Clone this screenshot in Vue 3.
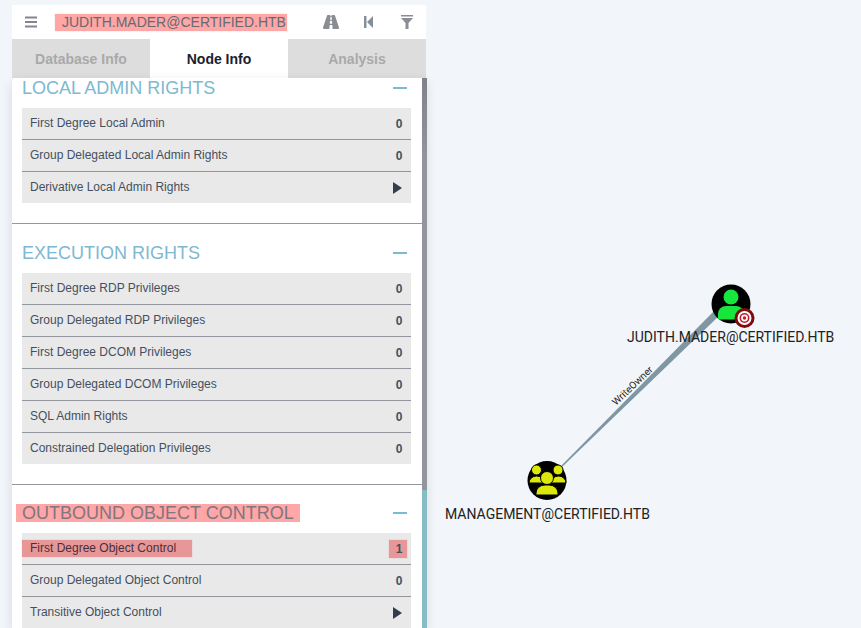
<template>
  <div class="page">
    <svg class="graph" viewBox="0 0 861 628" width="861" height="628">
      <polygon points="560,467 561,468 721,314 716,309" fill="#7f96a3" />
      <text class="edge-label" transform="translate(616,406) rotate(-43.5)">WriteOwner</text>

      <circle cx="731" cy="304" r="19.5" fill="#000" />
      <circle cx="731" cy="297" r="7.5" fill="#17e63c" />
      <path d="M718 318 v-4 a8 8 0 0 1 8-8 h10 a8 8 0 0 1 8 8 v4 a1.500 1.500 0 0 1-1.500 1.500 h-23 a1.500 1.500 0 0 1-1.500-1.500z" fill="#17e63c" />
      <circle cx="744.500" cy="318" r="10" fill="#7f0c0c" />
      <circle cx="744.500" cy="318" r="7" fill="#fff" />
      <circle cx="744.500" cy="318" r="5" fill="#c01c28" />
      <circle cx="744.500" cy="318" r="3.400" fill="#fff" />
      <circle cx="744.500" cy="318" r="1.700" fill="#c01c28" />
      <text class="node-label" x="627" y="342">JUDITH.MADER@CERTIFIED.HTB</text>

      <circle cx="547" cy="480.500" r="19.500" fill="#000" />
      <g fill="#dce80a" stroke="#000" stroke-width="1">
        <circle cx="536.500" cy="470" r="5" />
        <circle cx="558" cy="470" r="5" />
        <path d="M529 483 a7.500 7 0 0 1 15 0 z" />
        <path d="M551 483 a7.500 7 0 0 1 15 0 z" />
        <circle cx="547" cy="478" r="6.500" />
        <path d="M536 495 v-2 a9 8 0 0 1 9-8 h4 a9 8 0 0 1 9 8 v2 z" />
      </g>
      <text class="node-label" x="445" y="519">MANAGEMENT@CERTIFIED.HTB</text>
    </svg>

    <div class="panel">
      <div class="search-bar">
        <svg class="menu-icon" viewBox="0 0 12 12" width="12" height="12">
          <path d="M0 0.500h12v2H0zM0 5h12v2H0zM0 9.500h12v2H0z" fill="#83868c" />
        </svg>
        <div class="search-text"><span class="hl">JUDITH.MADER@CERTIFIED.HTB</span></div>
        <div class="bar-icons">
          <svg viewBox="0 64 576 384" width="16" height="14" preserveAspectRatio="none">
            <path d="M573.19 402.67l-139.79-320C428.43 71.29 417.6 64 405.68 64h-97.59l2.45 23.16c.5 4.72-3.21 8.84-7.96 8.84h-29.16c-4.75 0-8.46-4.12-7.96-8.84L267.91 64h-97.59c-11.93 0-22.76 7.29-27.73 18.67L2.8 402.67C-6.45 423.86 8.31 448 30.54 448h196.84l10.31-97.68c.86-8.14 7.72-14.32 15.91-14.32h68.8c8.19 0 15.05 6.18 15.91 14.32L348.62 448h196.84c22.23 0 36.99-24.14 27.73-45.33zM260.4 135.16a8 8 0 0 1 7.96-7.16h39.29c4.09 0 7.53 3.09 7.96 7.16l4.6 43.58c.75 7.09-4.81 13.26-11.93 13.26h-40.54c-7.13 0-12.68-6.17-11.93-13.26l4.6-43.58zM315.64 304h-55.29c-9.5 0-16.91-8.23-15.91-17.68l5.07-48c.86-8.14 7.72-14.32 15.91-14.32h45.15c8.19 0 15.05 6.18 15.91 14.32l5.07 48c1 9.45-6.41 17.68-15.91 17.68z" fill="#8a8d94" />
          </svg>
          <svg viewBox="0 0 9 12" width="9" height="12">
            <path d="M0 0h2.500v12H0zM9 0v12L3 6z" fill="#83909c" />
          </svg>
          <svg class="filter-icon" viewBox="0 0 12 14" width="12" height="14">
            <path d="M0 0h12v1.500H0zM0 3h12L7.500 8v6h-3V8z" fill="#8a8d94" />
          </svg>
        </div>
      </div>

      <div class="tabs">
        <div v-for="tab in tabs" :key="tab" class="tab" :class="{ active: tab === 'Node Info' }">{{ tab }}</div>
      </div>

      <div class="content">
        <div class="scroll-body">
          <section v-for="(section, i) in sections" :key="section.title" class="section" :class="{ first: i === 0 }">
            <div class="section-head">
              <h4 :class="{ flagged: section.flagged }"><span>{{ section.title }}</span></h4>
              <i class="collapse"></i>
            </div>
            <div class="rows">
              <div v-for="row in section.rows" :key="row.label" class="row">
                <span class="row-label" :class="{ hl: row.flagged }">{{ row.label }}</span>
                <span v-if="row.arrow" class="arrow"></span>
                <b v-else class="row-count" :class="{ hl: row.flagged }">{{ row.count }}</b>
              </div>
            </div>
          </section>
        </div>
        <div class="scrollbar">
          <div class="thumb"></div>
        </div>
      </div>
    </div>
  </div>
</template>

<script setup>
const tabs = ['Database Info', 'Node Info', 'Analysis']

const sections = [
  {
    title: 'LOCAL ADMIN RIGHTS',
    rows: [
      { label: 'First Degree Local Admin', count: 0 },
      { label: 'Group Delegated Local Admin Rights', count: 0 },
      { label: 'Derivative Local Admin Rights', arrow: true }
    ]
  },
  {
    title: 'EXECUTION RIGHTS',
    rows: [
      { label: 'First Degree RDP Privileges', count: 0 },
      { label: 'Group Delegated RDP Privileges', count: 0 },
      { label: 'First Degree DCOM Privileges', count: 0 },
      { label: 'Group Delegated DCOM Privileges', count: 0 },
      { label: 'SQL Admin Rights', count: 0 },
      { label: 'Constrained Delegation Privileges', count: 0 }
    ]
  },
  {
    title: 'OUTBOUND OBJECT CONTROL',
    flagged: true,
    rows: [
      { label: 'First Degree Object Control', count: 1, flagged: true },
      { label: 'Group Delegated Object Control', count: 0 },
      { label: 'Transitive Object Control', arrow: true }
    ]
  }
]
</script>

<style>
html,
body {
  margin: 0;
  height: 100%;
  overflow: hidden;
  background: #f2f5fa;
}
</style>

<style scoped>
.page {
  position: relative;
  width: 861px;
  height: 628px;
  overflow: hidden;
  background: #f2f5fa;
  font-family: "Liberation Sans", Arial, sans-serif;
  padding: 5px 0 0 12px;
  box-sizing: border-box;
}

.graph {
  position: absolute;
  left: 0;
  top: 0;
}

.node-label {
  font-family: Roboto, sans-serif;
  font-size: 14px;
  fill: #222;
}

.edge-label {
  font-family: Roboto, sans-serif;
  font-size: 10px;
  fill: #222;
}

.panel {
  position: relative;
  width: 414px;
  height: 623px;
  display: flex;
  flex-direction: column;
}

.search-bar {
  height: 34px;
  background: #fff;
  display: flex;
  align-items: center;
  padding-left: 13px;
  flex-shrink: 0;
}

.search-text {
  margin-left: 18px;
  font-size: 14px;
  color: #666a70;
  width: 232px;
  flex-shrink: 0;
}

.search-text .hl {
  display: block;
  padding: 0 1px 0 7px;
  line-height: 17px;
  white-space: nowrap;
}

.hl {
  background: rgba(255, 0, 0, 0.35);
  box-shadow: 0 0 0 1px rgba(255, 0, 0, 0.05);
}

.bar-icons {
  display: flex;
  align-items: center;
  margin-left: 36px;
  gap: 25px;
}

.filter-icon {
  margin-left: 3px;
}

.tabs {
  height: 39px;
  display: flex;
  flex-shrink: 0;
}

.tab {
  flex: 1;
  background: #ddd;
  color: #a9a9a9;
  font-size: 14px;
  font-weight: 700;
  display: flex;
  align-items: center;
  justify-content: center;
}

.tab.active {
  background: #fff;
  color: #1a2030;
}

.content {
  flex: 1;
  min-height: 0;
  display: flex;
  background: #fff;
  border-top-left-radius: 4px;
  box-shadow: 0 4px 12px rgba(0, 0, 0, 0.12);
}

.scroll-body {
  flex: 1;
  min-width: 0;
  overflow: hidden;
}

.scrollbar {
  position: relative;
  width: 5px;
  margin-right: -1px;
  background: #88bcc4;
}

.thumb {
  height: 412px;
  background: linear-gradient(#7f8289, #93959c 20%);
}

.section {
  padding: 19px 11px 20px 10px;
  border-top: 1px solid #96969e;
}

.section:last-child {
  padding-top: 18px;
}

.section.first {
  padding-top: 0;
  border-top: 0;
}

.section-head {
  height: 20px;
  display: flex;
  align-items: center;
  justify-content: space-between;
  margin: 0 0 10px;
}

h4 {
  margin: 0;
  font-size: 18px;
  font-weight: 400;
  line-height: 18px;
  color: #7eb8d2;
  white-space: nowrap;
}

h4.flagged span {
  display: inline-block;
  margin-left: -6px;
  padding: 0 6px;
  color: #81757f;
  background: rgba(255, 0, 0, 0.35);
}

.collapse {
  width: 14px;
  height: 2px;
  margin-right: 4px;
  background: #7eb8d2;
}

.rows {
  background: #e9e9e9;
}

.row {
  height: 32px;
  box-sizing: border-box;
  display: flex;
  align-items: center;
  justify-content: space-between;
  padding: 0 4px 0 8px;
  border-top: 1px solid #96969e;
  font-size: 12px;
  color: #44505f;
}

.row:first-child {
  height: 31px;
  border-top: 0;
}

.row-label {
  line-height: 17px;
}

.row-label.hl {
  margin-left: -8px;
  padding: 0 16px 0 8px;
  color: #4a2f3a;
  background: rgba(230, 0, 0, 0.35);
}

.row-count {
  min-width: 18px;
  line-height: 18px;
  text-align: center;
  box-sizing: border-box;
  padding-left: 2px;
}

.row-count.hl {
  background: rgba(230, 0, 0, 0.35);
}

.arrow {
  width: 0;
  height: 0;
  margin-right: 5px;
  border-left: 9px solid #333d4d;
  border-top: 6px solid transparent;
  border-bottom: 6px solid transparent;
}
</style>
